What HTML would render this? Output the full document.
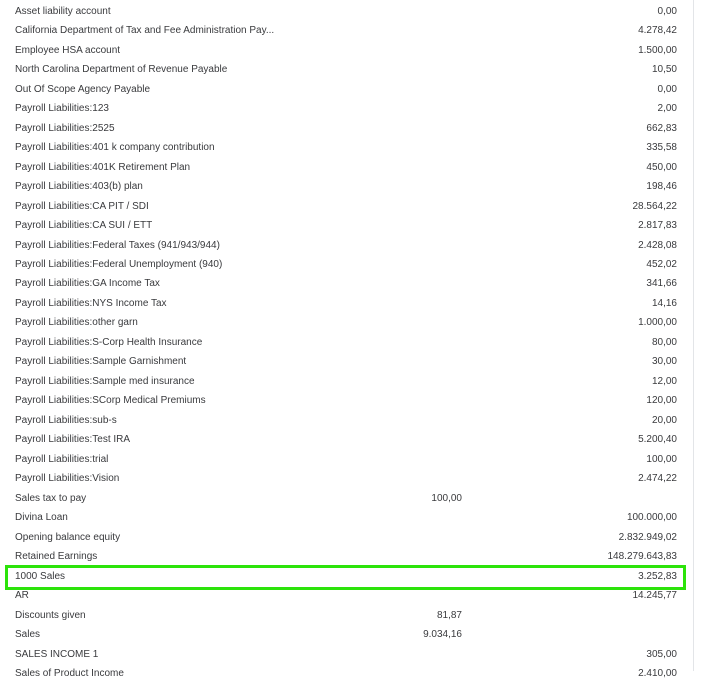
<!DOCTYPE html>
<html><head><meta charset="utf-8"><style>
body{margin:0;width:706px;height:671px;overflow:hidden;background:#fff;font-family:"Liberation Sans",sans-serif;font-size:10px;color:#393a3d;position:relative}
.r{position:absolute;left:0;width:706px;height:19px;line-height:19px}
.n{position:absolute;left:15px;white-space:nowrap}
.m{position:absolute;right:244px}
.v{position:absolute;right:29px}
.vl{position:absolute;left:693px;top:0;width:1px;height:671px;background:#e3e5e8}
.box{position:absolute;left:5px;top:565px;width:675px;height:19px;border:3px solid #2ce30a}
</style></head><body>
<div class="vl"></div>
<div id="c"></div>
<div class="box"></div>
<script>
var d=[["Asset liability account","","0,00"],["California Department of Tax and Fee Administration Pay...","","4.278,42"],["Employee HSA account","","1.500,00"],["North Carolina Department of Revenue Payable","","10,50"],["Out Of Scope Agency Payable","","0,00"],["Payroll Liabilities:123","","2,00"],["Payroll Liabilities:2525","","662,83"],["Payroll Liabilities:401 k company contribution","","335,58"],["Payroll Liabilities:401K Retirement Plan","","450,00"],["Payroll Liabilities:403(b) plan","","198,46"],["Payroll Liabilities:CA PIT / SDI","","28.564,22"],["Payroll Liabilities:CA SUI / ETT","","2.817,83"],["Payroll Liabilities:Federal Taxes (941/943/944)","","2.428,08"],["Payroll Liabilities:Federal Unemployment (940)","","452,02"],["Payroll Liabilities:GA Income Tax","","341,66"],["Payroll Liabilities:NYS Income Tax","","14,16"],["Payroll Liabilities:other garn","","1.000,00"],["Payroll Liabilities:S-Corp Health Insurance","","80,00"],["Payroll Liabilities:Sample Garnishment","","30,00"],["Payroll Liabilities:Sample med insurance","","12,00"],["Payroll Liabilities:SCorp Medical Premiums","","120,00"],["Payroll Liabilities:sub-s","","20,00"],["Payroll Liabilities:Test IRA","","5.200,40"],["Payroll Liabilities:trial","","100,00"],["Payroll Liabilities:Vision","","2.474,22"],["Sales tax to pay","100,00",""],["Divina Loan","","100.000,00"],["Opening balance equity","","2.832.949,02"],["Retained Earnings","","148.279.643,83"],["1000 Sales","","3.252,83"],["AR","","14.245,77"],["Discounts given","81,87",""],["Sales","9.034,16",""],["SALES INCOME 1","","305,00"],["Sales of Product Income","","2.410,00"]];
var h="";d.forEach(function(r,i){var t=10+19.48*i-8.3;h+='<div class="r" style="top:'+t.toFixed(1)+'px"><span class="n">'+r[0]+'</span><span class="m">'+r[1]+'</span><span class="v">'+r[2]+'</span></div>';});
document.getElementById("c").innerHTML=h;
</script>
</body></html>
